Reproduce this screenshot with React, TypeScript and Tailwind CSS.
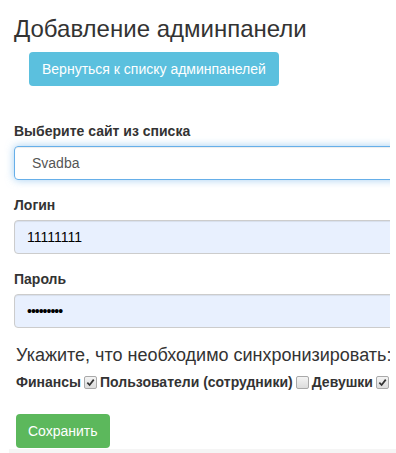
import React from 'react';

function Check({ checked }: { checked: boolean }) {
  return (
    <span className="inline-flex h-[13px] w-[13px] shrink-0 items-center justify-center rounded-[2px] border border-[#a9a9a9] bg-gradient-to-b from-[#f4f4f4] to-[#dcdcdc]">
      {checked && (
        <svg viewBox="0 0 10 10" className="h-[9px] w-[9px]">
          <path d="M1.5 5.2 L4 7.8 L8.6 1.8" fill="none" stroke="#333" strokeWidth="1.9" />
        </svg>
      )}
    </span>
  );
}

export default function App() {
  return (
    <div className="h-[453px] w-[396px] overflow-hidden bg-white font-['Liberation_Sans',Arial,sans-serif] text-[#333]">
      <div className="w-[390px] overflow-hidden pl-[14px] pt-[14px]">
        <h3 className="text-[24px] leading-[30px]">Добавление админпанели</h3>
        <button className="ml-[15px] mt-[8px] h-[34px] rounded-[4px] bg-[#5bc0de] px-[13px] text-[14px] text-white">
          Вернуться к списку админпанелей
        </button>

        <div className="mt-[35px]">
          <label className="block text-[14px] font-bold leading-[20px]">Выберите сайт из списка</label>
          <div className="mt-[5px] flex h-[34px] w-[400px] items-center rounded-[4px] border border-[#66afe9] pl-[17px] text-[14px] text-[#555] shadow-[inset_0_1px_1px_rgba(0,0,0,0.075),0_0_8px_rgba(102,175,233,0.6)]">
            Svadba
          </div>
        </div>

        <div className="mt-[15px]">
          <label className="block text-[14px] font-bold leading-[20px]">Логин</label>
          <div className="mt-[5px] flex h-[34px] w-[400px] items-center rounded-[4px] border border-[#ccc] bg-[#e8f0fe] pl-[12px] text-[14px] text-black shadow-[inset_0_1px_1px_rgba(0,0,0,0.075)]">
            11111111
          </div>
        </div>

        <div className="mt-[15px]">
          <label className="block text-[14px] font-bold leading-[20px]">Пароль</label>
          <div className="mt-[5px] flex h-[34px] w-[400px] items-center rounded-[4px] border border-[#ccc] bg-[#e8f0fe] pl-[12px] text-[14px] tracking-[-1px] text-black shadow-[inset_0_1px_1px_rgba(0,0,0,0.075)]">
            •••••••••
          </div>
        </div>

        <div className="pl-[2px]">
          <h4 className="mt-[15px] whitespace-nowrap text-[18px] leading-[24px]">Укажите, что необходимо синхронизировать:</h4>
          <div className="mt-[5px] flex h-[20px] items-center gap-[3px] whitespace-nowrap text-[14px] font-bold leading-[20px]">
            <span>Финансы</span>
            <Check checked />
            <span>Пользователи (сотрудники)</span>
            <Check checked={false} />
            <span>Девушки</span>
            <Check checked />
          </div>
          <button className="mt-[22px] h-[34px] rounded-[4px] bg-[#5cb85c] px-[12px] text-[14px] text-white">
            Сохранить
          </button>
        </div>
      </div>
      <div className="ml-[9px] mt-[1px] h-[6px] bg-[#f5f5f5]" />
    </div>
  );
}
